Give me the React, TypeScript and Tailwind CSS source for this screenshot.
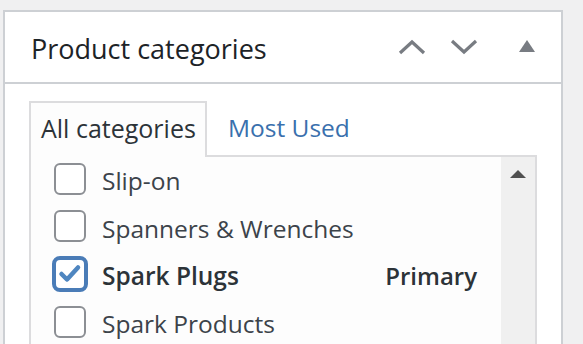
import React from "react";

const font = { fontFamily: '"Open Sans", "Noto Sans", sans-serif' };

function Box({ checked }: { checked?: boolean }) {
  if (checked) {
    return (
      <div className="w-[36px] h-[36px] -ml-[2px] mr-[-2px] rounded-[8px] border-[4px] border-[#4a7cb7] bg-white flex items-center justify-center shrink-0">
        <svg width="26" height="22" viewBox="0 0 26 22">
          <path d="M4.5 11 L10 16.5 L21 4.5" fill="none" stroke="#4f86c0" strokeWidth="4.5" strokeLinecap="round" strokeLinejoin="round" />
        </svg>
      </div>
    );
  }
  return <div className="w-[32px] h-[32px] rounded-[6px] border-2 border-[#8c8f94] bg-white shrink-0" />;
}

function Row({ label, checked, primary }: { label: string; checked?: boolean; primary?: boolean }) {
  return (
    <div className="h-[47.67px] flex items-center pl-[23px] pr-[24px]">
      <Box checked={checked} />
      <span className={`ml-[16px] mt-[5px] text-[24.5px] ${checked ? "font-semibold text-[#2c3338]" : "text-[#3c434a]"}`}>{label}</span>
      {primary && <span className="ml-auto mt-[4px] text-[24px] font-semibold text-[#2c3338]">Primary</span>}
    </div>
  );
}

export default function App() {
  return (
    <div className="w-[583px] h-[344px] overflow-hidden bg-[#f0f0f1] pl-[3px] pt-[10px]" style={font}>
      <div className="w-[560px] h-[400px] border-2 border-[#cdd0d4] bg-white">
        <div className="h-[72px] border-b-2 border-[#cdd0d4] flex items-center pl-[26px] pr-[26px]">
          <h2 className="mt-[3px] text-[27px] font-medium text-[#1d2327] leading-none">Product categories</h2>
          <div className="ml-auto flex items-center">
            <svg width="28" height="16" viewBox="0 0 28 16" className="mr-[24px]">
              <path d="M2 14 L14 3 L26 14" fill="none" stroke="#787c82" strokeWidth="3.2" />
            </svg>
            <svg width="28" height="16" viewBox="0 0 28 16" className="mr-[41px]">
              <path d="M2 2 L14 13 L26 2" fill="none" stroke="#787c82" strokeWidth="3.2" />
            </svg>
            <svg width="16" height="12" viewBox="0 0 16 12" className="mb-[3px]">
              <path d="M0 12 L8 0 L16 12 Z" fill="#787c82" />
            </svg>
          </div>
        </div>
        <div className="pt-[17px] pl-[24px]">
          <div className="flex items-end">
            <div className="relative z-10 w-[178px] h-[56px] -mb-[2px] border-2 border-b-0 border-[#dcdcde] bg-[#fdfdfd] pl-[10px] pt-[7px] text-[25px] text-[#2c3338]">
              All categories
            </div>
            <div className="h-[54px] pl-[21px] pt-[9px] text-[24.5px] text-[#3a70ad]">Most Used</div>
          </div>
          <div className="w-[508px] h-[200px] border-2 border-[#dcdcde] bg-[#fdfdfd] flex">
            <div className="flex-1 -mt-[2px]">
              <Row label="Slip-on" />
              <Row label="Spanners & Wrenches" />
              <Row label="Spark Plugs" checked primary />
              <Row label="Spark Products" />
            </div>
            <div className="w-[34px] bg-[#f0f0f0] flex justify-center pt-[13px]">
              <svg width="16" height="8" viewBox="0 0 16 8">
                <path d="M0 8 L8 0 L16 8 Z" fill="#505050" />
              </svg>
            </div>
          </div>
        </div>
      </div>
    </div>
  );
}
